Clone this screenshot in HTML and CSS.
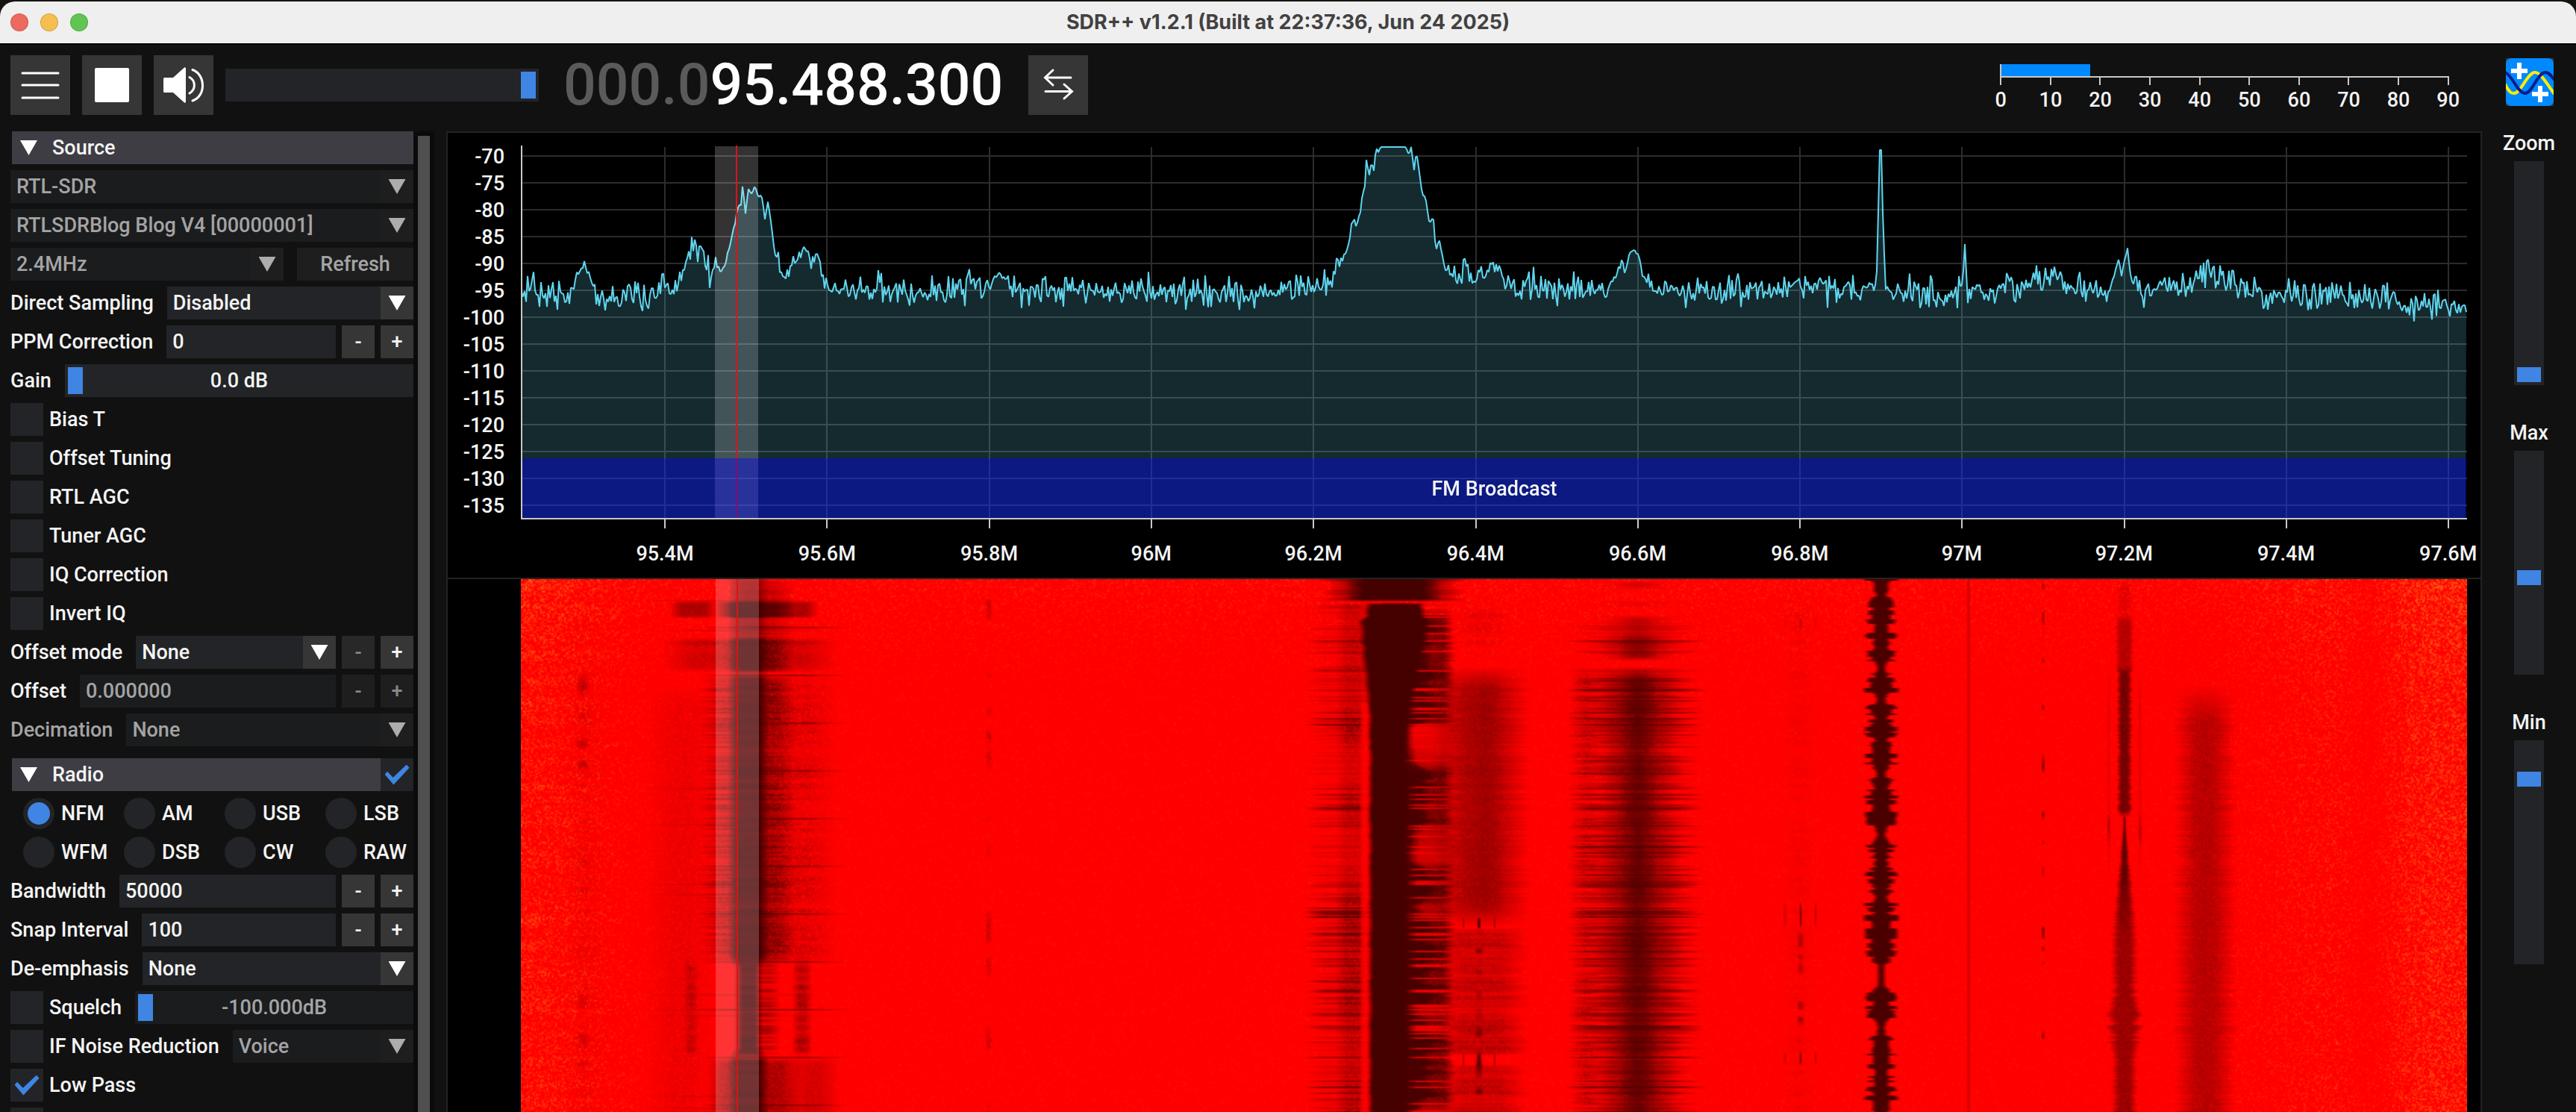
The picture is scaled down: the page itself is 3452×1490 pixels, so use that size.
FILE: index.html
```html
<!DOCTYPE html>
<html lang="en">

<head>
    <meta charset="UTF-8">
    <meta name="viewport" content="width=device-width, initial-scale=1.0">
    <title>SDR++ v1.2.1</title>
    <link rel="stylesheet" href="styles.css">
</head>

<body>
    <div class="window">
        <header class="titlebar">
            <div class="lights">
                <span class="light close"></span>
                <span class="light minimize"></span>
                <span class="light maximize"></span>
            </div>
            <h1>SDR++ v1.2.1 (Built at 22:37:36, Jun 24 2025)</h1>
        </header>

        <div class="toolbar">
            <button class="icon-btn" aria-label="Menu">
                <svg viewBox="0 0 80 80"><path d="M16 24H64M16 40H64M16 57H64" stroke="#fff" stroke-width="3" stroke-linecap="round" /></svg>
            </button>
            <button class="icon-btn" aria-label="Stop">
                <svg viewBox="0 0 80 80"><rect x="17" y="17" width="46" height="46" rx="2" fill="#fff" /></svg>
            </button>
            <button class="icon-btn" aria-label="Mute">
                <svg viewBox="0 0 80 80">
                    <path d="M13 31.500Q13 30 14.500 30H26L41 16.500Q43 15.500 43 18V62Q43 64.500 41 63.500L26 50H14.500Q13 50 13 48.500Z" fill="#fff" />
                    <path d="M48 29.500C56.500 34 56.500 46 48 51M52 19.500C70 26 70 55 52 61" fill="none" stroke="#fff" stroke-width="3" stroke-linecap="round" />
                </svg>
            </button>
            <input type="range" class="slider volume" aria-label="Volume" min="0" max="100" value="100">
            <div class="frequency"><span class="leading">000.0</span>95.488.300</div>
            <button class="icon-btn" aria-label="Tuning mode">
                <svg viewBox="0 0 80 80"><path d="M57 30H23M33 20L22.500 30L33 40M23 48.500H57M48 39L58.500 48.500L48 58" fill="none" stroke="#fff" stroke-width="3" stroke-linecap="round" /></svg>
            </button>

            <div class="snr">
                <div class="snr-track"><div class="snr-bar" style="width: 19.8%"></div></div>
                <ol class="snr-scale">
                    <li>0</li>
                    <li>10</li>
                    <li>20</li>
                    <li>30</li>
                    <li>40</li>
                    <li>50</li>
                    <li>60</li>
                    <li>70</li>
                    <li>80</li>
                    <li>90</li>
                </ol>
            </div>

            <svg class="logo" viewBox="0 0 64 64">
                <rect width="64" height="64" fill="#333" />
                <rect width="64" height="64" rx="7" fill="#0089ff" />
                <path d="M-1 35C5 47 8 47 11 47C20 47 29 19 39 19C47 19 56 36 65 48" fill="none" stroke="#ffee00" stroke-width="4" />
                <path d="M-1 19C8 22 16 47 25.500 47C36 47 42 19 53 19C58 19 61 24 65 29" fill="none" stroke="#0a1c8c" stroke-width="4" />
                <path d="M18 6V28M7 17H29M46 37V59M35 48H57" stroke="#fff" stroke-width="6" />
            </svg>
        </div>

        <div class="content">
            <aside class="sidebar">
                <div class="menu">
                    <div class="section">
                        <h2><span class="triangle"></span>Source</h2>
                    </div>
                    <div class="row disabled">
                        <div class="combo"><select disabled aria-label="Source"><option>RTL-SDR</option></select></div>
                    </div>
                    <div class="row disabled">
                        <div class="combo"><select disabled aria-label="Device"><option>RTLSDRBlog Blog V4 [00000001]</option></select></div>
                    </div>
                    <div class="row disabled">
                        <div class="combo"><select disabled aria-label="Sample rate"><option>2.4MHz</option></select></div>
                        <button class="refresh" disabled>Refresh</button>
                    </div>
                    <div class="row">
                        <label for="direct">Direct Sampling</label>
                        <div class="combo"><select id="direct"><option>Disabled</option></select></div>
                    </div>
                    <div class="row">
                        <label for="ppm">PPM Correction</label>
                        <div class="stepper">
                            <input type="text" id="ppm" value="0">
                            <button class="step">-</button>
                            <button class="step">+</button>
                        </div>
                    </div>
                    <div class="row">
                        <label for="gain">Gain</label>
                        <div class="slider-box">
                            <input type="range" class="slider" id="gain" min="0" max="49" value="0">
                            <span class="slider-value">0.0 dB</span>
                        </div>
                    </div>
                    <label class="row check"><input type="checkbox">Bias T</label>
                    <label class="row check"><input type="checkbox">Offset Tuning</label>
                    <label class="row check"><input type="checkbox">RTL AGC</label>
                    <label class="row check"><input type="checkbox">Tuner AGC</label>
                    <label class="row check"><input type="checkbox">IQ Correction</label>
                    <label class="row check"><input type="checkbox">Invert IQ</label>
                    <div class="row">
                        <label for="offset-mode">Offset mode</label>
                        <div class="stepper">
                            <div class="combo"><select id="offset-mode"><option>None</option></select></div>
                            <button class="step dim">-</button>
                            <button class="step">+</button>
                        </div>
                    </div>
                    <div class="row">
                        <label for="offset">Offset</label>
                        <div class="stepper">
                            <input type="text" id="offset" value="0.000000" disabled>
                            <button class="step" disabled>-</button>
                            <button class="step" disabled>+</button>
                        </div>
                    </div>
                    <div class="row disabled">
                        <label for="decimation">Decimation</label>
                        <div class="combo"><select id="decimation" disabled><option>None</option></select></div>
                    </div>

                    <div class="section spaced">
                        <h2><span class="triangle"></span>Radio</h2>
                        <input type="checkbox" aria-label="Enable radio" checked>
                    </div>
                    <div class="modes">
                        <label><input type="radio" name="mode" checked>NFM</label>
                        <label><input type="radio" name="mode">AM</label>
                        <label><input type="radio" name="mode">USB</label>
                        <label><input type="radio" name="mode">LSB</label>
                        <label><input type="radio" name="mode">WFM</label>
                        <label><input type="radio" name="mode">DSB</label>
                        <label><input type="radio" name="mode">CW</label>
                        <label><input type="radio" name="mode">RAW</label>
                    </div>
                    <div class="row">
                        <label for="bandwidth">Bandwidth</label>
                        <div class="stepper">
                            <input type="text" id="bandwidth" value="50000">
                            <button class="step">-</button>
                            <button class="step">+</button>
                        </div>
                    </div>
                    <div class="row">
                        <label for="snap">Snap Interval</label>
                        <div class="stepper">
                            <input type="text" id="snap" value="100">
                            <button class="step">-</button>
                            <button class="step">+</button>
                        </div>
                    </div>
                    <div class="row">
                        <label for="deemphasis">De-emphasis</label>
                        <div class="combo"><select id="deemphasis"><option>None</option></select></div>
                    </div>
                    <div class="row">
                        <label class="check"><input type="checkbox">Squelch</label>
                        <div class="slider-box disabled">
                            <input type="range" class="slider" aria-label="Squelch level" min="-100" max="0" value="-100" disabled>
                            <span class="slider-value">-100.000dB</span>
                        </div>
                    </div>
                    <div class="row">
                        <label class="check"><input type="checkbox">IF Noise Reduction</label>
                        <div class="combo disabled"><select disabled aria-label="Noise reduction preset"><option>Voice</option></select></div>
                    </div>
                    <label class="row check"><input type="checkbox" checked>Low Pass</label>
                    <label class="row check"><input type="checkbox">High Pass</label>
                </div>
                <div class="scrollbar"><div class="thumb"></div></div>
            </aside>

            <main class="plots">
                <div class="spectrum">
                    <ol class="db-scale">
                        <li>-70</li>
                        <li>-75</li>
                        <li>-80</li>
                        <li>-85</li>
                        <li>-90</li>
                        <li>-95</li>
                        <li>-100</li>
                        <li>-105</li>
                        <li>-110</li>
                        <li>-115</li>
                        <li>-120</li>
                        <li>-125</li>
                        <li>-130</li>
                        <li>-135</li>
                    </ol>
                    <canvas id="fft"></canvas>
                    <div class="band">FM Broadcast</div>
                    <ol class="freq-scale">
                        <li style="left: 7.4%">95.4M</li>
                        <li style="left: 15.73%">95.6M</li>
                        <li style="left: 24.06%">95.8M</li>
                        <li style="left: 32.39%">96M</li>
                        <li style="left: 40.72%">96.2M</li>
                        <li style="left: 49.05%">96.4M</li>
                        <li style="left: 57.38%">96.6M</li>
                        <li style="left: 65.71%">96.8M</li>
                        <li style="left: 74.04%">97M</li>
                        <li style="left: 82.37%">97.2M</li>
                        <li style="left: 90.7%">97.4M</li>
                        <li style="left: 99.03%">97.6M</li>
                    </ol>
                </div>
                <div class="waterfall">
                    <canvas id="waterfall"></canvas>
                    <div class="vfo"></div>
                </div>
            </main>

            <aside class="levels">
                <label for="zoom">Zoom</label>
                <input type="range" class="slider vertical" id="zoom" min="0" max="1000" value="0">
                <label for="max">Max</label>
                <input type="range" class="slider vertical" id="max" min="0" max="1000" value="426">
                <label for="min">Min</label>
                <input type="range" class="slider vertical" id="min" min="0" max="1000" value="860">
            </aside>
        </div>
    </div>

    <script src="script.js"></script>
</body>

</html>
```
FILE: styles.css
```css
* {
    margin: 0;
    padding: 0;
    box-sizing: border-box;
}

:root {
    --bg: #111111;
    --frame: #232427;
    --frame-disabled: #1b1c1e;
    --button: #363636;
    --button-disabled: #1e1e1e;
    --header: #3e3d44;
    --border: #232323;
    --accent: #3f85e3;
    --text: #f4f4f4;
    --text-disabled: #a4a4a4;
}

body {
    background: #14150f;
    color: var(--text);
    font-family: Roboto, "Liberation Sans", sans-serif;
    font-size: 27px;
    font-weight: 500;
    line-height: 32px;
    overflow: hidden;
}

button,
input,
select {
    font: inherit;
    color: inherit;
    border: none;
    border-radius: 0;
    outline: none;
    appearance: none;
}

ol {
    list-style: none;
}

.window {
    display: flex;
    flex-direction: column;
    height: 100vh;
    padding-top: 2px;
}

/* title bar */
.titlebar {
    display: grid;
    grid-template-columns: 1fr auto 1fr;
    align-items: center;
    height: 58px;
    flex: none;
    padding: 0 14px;
    background: #f0efef;
    border-bottom: 2px solid #000;
    border-radius: 20px 20px 0 0;
}

.titlebar h1 {
    font-family: Inter, sans-serif;
    font-size: 27px;
    font-weight: 700;
    color: #414141;
}

.lights {
    display: flex;
    gap: 16px;
}

.light {
    width: 24px;
    height: 24px;
    border-radius: 50%;
    border: 1px solid rgba(0, 0, 0, 0.15);
}

.close {
    background: #ed6a5f;
}

.minimize {
    background: #f5bf4f;
}

.maximize {
    background: #61c554;
}

/* toolbar */
.toolbar {
    display: flex;
    flex: none;
    align-items: flex-start;
    gap: 16px;
    height: 116px;
    padding: 14px 30px 0 14px;
    background: var(--bg);
}

.icon-btn {
    width: 80px;
    height: 80px;
    background: var(--button);
}

.icon-btn svg {
    display: block;
}

.volume {
    width: 420px;
    margin-top: 18px;
}

.frequency {
    margin: 0 18px 0 17px;
    font-size: 77px;
    line-height: 80px;
    color: #fff;
}

.leading {
    color: #5a5a5a;
}

.snr {
    width: 666px;
    margin: 12px 28px 0 auto;
}

.snr-track {
    height: 18px;
    margin: 0 32px;
    border-left: 2px solid #c8c8c8;
    border-bottom: 2px solid #c8c8c8;
}

.snr-bar {
    height: 16px;
    background: #0089ff;
}

.snr-scale {
    display: grid;
    grid-template-columns: repeat(10, 1fr);
    text-align: center;
}

.snr-scale li::before {
    content: "";
    display: block;
    width: 2px;
    height: 10px;
    margin: 0 auto 4px;
    background: #c8c8c8;
}

.logo {
    width: 64px;
    height: 64px;
    margin-top: 4px;
}

/* layout under the toolbar */
.content {
    display: grid;
    grid-template-columns: 582px 1fr 126px;
    flex: 1;
    min-height: 0;
    background: var(--bg);
}

.sidebar {
    display: flex;
    min-height: 0;
    overflow: hidden;
}

.menu {
    display: flex;
    flex-direction: column;
    flex: 1;
    gap: 8px;
    min-width: 0;
    padding-left: 14px;
}

.scrollbar {
    flex: none;
    width: 28px;
    padding: 6px 6px 0;
    background: #0b0b0b;
}

.thumb {
    height: 100%;
    background: #4f4f4f;
}

.row {
    display: flex;
    flex: none;
    align-items: center;
    gap: 18px;
    height: 44px;
    white-space: nowrap;
}

.disabled {
    color: var(--text-disabled);
}

.section {
    display: flex;
    flex: none;
    height: 44px;
    padding-left: 2px;
}

.spaced {
    margin-top: 8px;
}

.section h2 {
    display: flex;
    flex: 1;
    align-items: center;
    gap: 20px;
    padding-left: 11px;
    background: var(--header);
    font-size: 27px;
    font-weight: 500;
}

.triangle {
    width: 23px;
    height: 20px;
    background: #fff;
    clip-path: polygon(0 0, 100% 0, 50% 100%);
}

.combo {
    display: grid;
    flex: 1;
    grid-template-columns: 1fr 44px;
    align-items: center;
    min-width: 0;
}

.combo select {
    grid-area: 1 / 1 / 2 / 3;
    width: 100%;
    height: 44px;
    padding: 0 52px 0 8px;
    background: linear-gradient(var(--button), var(--button)) right / 44px 100% no-repeat var(--frame);
    opacity: 1;
}

.combo::after {
    content: "";
    grid-area: 1 / 2;
    justify-self: center;
    width: 23px;
    height: 20px;
    background: #fff;
    clip-path: polygon(0 0, 100% 0, 50% 100%);
    z-index: 1;
    pointer-events: none;
}

.combo select:disabled {
    background: linear-gradient(var(--button-disabled), var(--button-disabled)) right / 44px 100% no-repeat var(--frame-disabled);
}

.disabled .combo::after,
.combo.disabled::after {
    background: #adadad;
}

.refresh {
    width: 156px;
    height: 44px;
    background: var(--button-disabled);
}

.stepper {
    display: flex;
    flex: 1;
    gap: 8px;
    min-width: 0;
}

input[type="text"] {
    flex: 1;
    min-width: 0;
    height: 44px;
    padding: 0 8px;
    background: var(--frame);
}

input[type="text"]:disabled {
    background: var(--frame-disabled);
    color: var(--text-disabled);
}

.step {
    flex: none;
    width: 44px;
    height: 44px;
    background: var(--button);
}

.step.dim {
    background: #282828;
    color: #888;
}

.step:disabled {
    background: var(--button-disabled);
    color: #888;
}

/* check boxes and radio buttons */
.check {
    display: flex;
    align-items: center;
    gap: 8px;
}

input[type="checkbox"] {
    display: grid;
    place-items: center;
    flex: none;
    width: 44px;
    height: 44px;
    background: var(--frame);
}

input[type="checkbox"]:checked::before {
    content: "";
    width: 33px;
    height: 27px;
    background: var(--accent);
    clip-path: polygon(0 48%, 11% 34%, 34% 64%, 89% 0, 100% 16%, 36% 100%);
}

.modes {
    display: grid;
    flex: none;
    grid-template-columns: repeat(4, 135px);
    gap: 8px 0;
    padding-left: 17px;
    white-space: nowrap;
}

.modes label {
    display: flex;
    align-items: center;
    gap: 9px;
    height: 44px;
}

input[type="radio"] {
    display: grid;
    place-items: center;
    width: 42px;
    height: 42px;
    border-radius: 50%;
    background: var(--frame);
}

input[type="radio"]:checked::before {
    content: "";
    width: 30px;
    height: 30px;
    border-radius: 50%;
    background: var(--accent);
}

/* sliders */
.slider {
    height: 44px;
    padding: 4px;
    background: var(--frame);
}

.slider::-webkit-slider-thumb {
    appearance: none;
    width: 20px;
    height: 36px;
    background: var(--accent);
}

.slider:disabled {
    background: var(--frame-disabled);
}

.slider-box {
    display: grid;
    flex: 1;
    align-items: center;
    min-width: 0;
}

.slider-box .slider {
    grid-area: 1 / 1;
    width: 100%;
}

.slider-value {
    grid-area: 1 / 1;
    justify-self: center;
    z-index: 1;
    pointer-events: none;
}

.levels {
    display: flex;
    flex-direction: column;
    align-items: center;
}

.levels label {
    padding-bottom: 8px;
}

.vertical {
    writing-mode: vertical-lr;
    direction: rtl;
    width: 40px;
    height: 300px;
    margin-bottom: 48px;
}

.vertical::-webkit-slider-thumb {
    width: 32px;
    height: 20px;
}

/* spectrum and waterfall */
.plots {
    display: grid;
    grid-template-rows: 598px 1fr;
    min-width: 0;
    min-height: 0;
    margin-left: 16px;
    border: 2px solid var(--border);
    border-bottom: none;
    background: #000;
}

.spectrum {
    display: grid;
    grid-template-columns: 98px minmax(0, 1fr) 18px;
    grid-template-rows: 532px 64px;
    border-bottom: 2px solid var(--border);
}

.db-scale {
    padding: 14px 22px 0 0;
    line-height: 36px;
    text-align: right;
}

#fft {
    grid-area: 1 / 2;
    width: 100%;
    height: 516px;
    margin-top: 16px;
}

.band {
    display: flex;
    grid-area: 1 / 2;
    align-items: center;
    align-self: end;
    justify-content: center;
    height: 80px;
    margin: 0 1px 16px 2px;
    padding-top: 2px;
    background: rgba(0, 0, 255, 0.4);
    z-index: 1;
}

.freq-scale {
    position: relative;
    grid-area: 2 / 2;
    line-height: 64px;
}

.freq-scale li {
    position: absolute;
    transform: translateX(-50%);
}

.waterfall {
    position: relative;
    min-height: 0;
    margin: 0 18px 0 98px;
    overflow: hidden;
}

#waterfall {
    display: block;
    width: 100%;
    height: 100%;
}

.vfo {
    position: absolute;
    top: 0;
    bottom: 0;
    left: 10%;
    width: 58px;
    background: linear-gradient(#dc1414, #dc1414) center / 2px 100% no-repeat rgba(255, 255, 255, 0.2);
}
```
FILE: script.js
```javascript
// Deterministic noise helpers
function hash(a, b) {
    let h = Math.imul(a | 0, 374761393) + Math.imul(b | 0, 668265263);
    h = Math.imul(h ^ (h >>> 13), 1274126177);
    return ((h ^ (h >>> 16)) >>> 0) / 4294967296;
}

function smoothNoise(seed, t) {
    const i = Math.floor(t);
    const f = t - i;
    const k = f * f * (3 - 2 * f);
    return hash(seed, i) * (1 - k) + hash(seed, i + 1) * k;
}

function clamp(v) {
    return Math.max(0, Math.min(1, v));
}

// Both plots use a 2608 unit wide axis, stretched over the canvas
const SPAN = 2608;

// [x, y, jitter] of the trace, y counted from the top of the plot
const trace = [
    [0, 205, 11], [68, 200, 9], [74, 178, 5], [82, 166, 6], [92, 173, 3], [100, 206, 8], [182, 203, 11],
    [195, 188, 10], [203, 198, 9], [217, 172, 5], [225, 146, 5], [235, 140, 8], [245, 148, 7], [254, 172, 7],
    [262, 160, 5], [272, 166, 2], [278, 142, 2], [285, 112, 1], [288, 102, 1], [290, 84, 1], [295, 80, 1],
    [297, 54, 1], [301, 90, 1], [305, 58, 1], [310, 66, 1], [314, 54, 1], [317, 68, 1], [323, 69, 1],
    [327, 98, 1], [331, 76, 1], [335, 102, 1], [338, 130, 1], [342, 152, 2], [345, 146, 2], [348, 174, 3],
    [352, 182, 3], [360, 166, 5], [372, 156, 8], [382, 141, 3], [388, 154, 6], [396, 144, 4], [402, 172, 6],
    [412, 184, 6], [425, 195, 6], [477, 192, 9], [479, 168, 0], [481, 194, 8], [598, 194, 9], [600, 158, 0],
    [603, 182, 3], [620, 190, 8], [642, 172, 2], [660, 196, 9], [1000, 196, 9], [1062, 190, 9], [1087, 184, 8],
    [1097, 160, 7], [1105, 148, 3], [1110, 132, 2], [1114, 100, 2], [1120, 108, 7], [1127, 80, 4], [1131, 55, 2],
    [1133, 20, 1], [1137, 40, 1], [1140, 20, 1], [1143, 36, 1], [1146, 3, 0], [1149, 10, 0], [1152, 3, 0],
    [1186, 3, 0], [1190, 14, 0], [1193, 3, 0], [1197, 34, 0], [1200, 8, 0], [1204, 38, 1], [1208, 66, 1],
    [1213, 72, 2], [1217, 102, 1], [1223, 100, 1], [1226, 146, 3], [1231, 134, 4], [1238, 162, 6], [1250, 175, 7],
    [1275, 176, 11], [1298, 160, 8], [1310, 160, 6], [1318, 180, 7], [1337, 192, 9], [1452, 196, 9], [1465, 182, 4],
    [1475, 158, 3], [1480, 170, 3], [1487, 140, 2], [1492, 142, 2], [1498, 146, 1], [1503, 176, 1], [1514, 190, 6],
    [1600, 200, 8], [1725, 186, 9], [1760, 200, 9], [1816, 194, 7], [1819, 90, 0], [1821, 7, 0], [1823, 7, 0],
    [1826, 130, 0], [1829, 186, 3], [1842, 196, 10], [1900, 201, 8], [1932, 190, 9], [1935, 133, 0], [1938, 190, 7],
    [1960, 200, 8], [2022, 184, 9], [2034, 176, 7], [2080, 188, 8], [2124, 202, 9], [2134, 178, 2], [2141, 154, 1],
    [2145, 174, 1], [2153, 139, 1], [2157, 174, 2], [2166, 194, 7], [2240, 188, 8], [2259, 172, 7], [2261, 154, 0],
    [2265, 176, 5], [2284, 176, 9], [2300, 196, 9], [2412, 204, 9], [2500, 202, 8], [2514, 216, 7], [2560, 211, 9],
    [2606, 214, 7]
];

function traceLevel(x) {
    let i = 0;
    while (i < trace.length - 2 && trace[i + 1][0] < x) i++;
    const [x0, y0, j0] = trace[i];
    const [x1, y1, j1] = trace[i + 1];
    const k = clamp((x - x0) / (x1 - x0));
    const n = hash(7, x) + hash(8, x) + hash(9, x) - 1.5;
    const spike = hash(10, x) > 0.93 ? (hash(11, x) - 0.5) * 3 : 0;
    return Math.max(2, y0 + (y1 - y0) * k + (j0 + (j1 - j0) * k) * (n * 2.3 + spike));
}

function drawSpectrum() {
    const canvas = document.getElementById('fft');
    const w = canvas.width = canvas.clientWidth;
    const h = canvas.height = canvas.clientHeight;
    const ctx = canvas.getContext('2d');
    const sx = w / SPAN;
    const bottom = 500;

    // Grid
    ctx.fillStyle = '#2c2c2c';
    for (let i = 0; i < 14; i++) {
        ctx.fillRect(0, 14 + i * 36, w, 2);
    }
    for (let i = 0; i < 12; i++) {
        ctx.fillRect(Math.round((193 + i * 217.3) * sx) - 1, 3, 2, bottom - 3);
    }

    // Trace with its fill
    const path = new Path2D();
    for (let x = 1; x < SPAN; x += 2) {
        path.lineTo(x * sx, traceLevel(x));
    }
    const area = new Path2D(path);
    area.lineTo(w - 2, bottom);
    area.lineTo(1, bottom);
    area.closePath();
    ctx.fillStyle = 'rgba(100, 212, 236, 0.2)';
    ctx.fill(area);
    ctx.strokeStyle = '#60d5ee';
    ctx.lineWidth = 2;
    ctx.lineJoin = 'bevel';
    ctx.stroke(path);

    // VFO
    const left = w * 0.1;
    ctx.fillStyle = 'rgba(255, 255, 255, 0.2)';
    ctx.fillRect(Math.round(left) - 1, 2, 58, bottom - 2);
    ctx.fillStyle = '#dc1414';
    ctx.fillRect(Math.round(left) + 27, 1, 2, bottom - 1);

    // Axes and ticks
    ctx.fillStyle = '#c8c8c8';
    ctx.fillRect(0, 1, 2, bottom);
    ctx.fillRect(0, bottom, w, 2);
    for (let i = 0; i < 12; i++) {
        ctx.fillRect(Math.round((193 + i * 217.3) * sx) - 1, bottom, 2, 14);
    }
}

// Soft edged band, 1 in the middle and 0 outside
function band(x, center, half, soft) {
    return clamp((half - Math.abs(x - center)) / soft + 0.5);
}

function between(y, from, to, soft) {
    return clamp((y - from) / soft) * clamp((to - y) / soft);
}

// Everything that is constant along one line of the waterfall
function lineState(y) {
    const row = Math.round(y / 2);
    return {
        fast: hash(21, row),
        fast2: hash(22, row),
        fast3: hash(23, row),
        mid: smoothNoise(24, y / 6),
        mid2: smoothNoise(25, y / 7),
        slow: smoothNoise(26, y / 34),
        slow2: smoothNoise(27, y / 50),
        am: smoothNoise(28, y / 5)
    };
}

function signal(x, y, l, grain) {
    let s = 0;
    const add = v => { s += v * (1 - s); };

    // 95.3M, weak bursts
    if (x < 200) {
        const burst = smoothNoise(31, y / 13);
        add(band(x, 82, 5, 9) * clamp((burst - 0.66) * 2.6) * clamp((y - 110) / 30) * (0.1 + grain * 0.6));
        add(band(x, 86, 14, 30) * 0.16 * grain * l.mid * clamp(y / 160));
    }

    // 95.5M
    if (x > 130 && x < 500) {
        const burst = between(y, 28, 52, 4);
        const block = between(y, 76, 124, 8);
        const talk = between(y, 126, 515, 14);
        const tone = between(y, 505, 642, 14);
        const tail = clamp((y - 640) / 8);
        const soft = 0.5 + grain * 0.5;
        add(band(x, 304, 22 - tone * 8, 12) * clamp(0.45 + burst + block + talk + tone + tail) * (0.8 + l.mid * 0.2));
        add(band(x, 322, 30, 30) * (0.2 + l.fast * 0.35) * between(y, 0, 125, 4) * soft);
        add((band(x, 230, 24, 16) + band(x, 368, 22, 16)) * burst * (0.36 + grain * 0.14));
        add(band(x, 312, 42, 24) * burst * 0.8);
        add(band(x, 306, 96, 44) * block * (0.2 + l.mid * 0.4) * soft);
        add(band(x, 316, 34, 30) * block * 0.7 * soft);
        add(band(x, 303, 38 + l.fast * 14, 34) * talk * (0.15 + l.fast * 0.5) * soft);
        add(band(x, 326, 24 + l.mid2 * 8, 24) * talk * (0.1 + l.fast2 * 0.35 + l.slow * 0.25) * soft);
        add(band(x, 368, 36, 40) * talk * (0.08 + l.mid * 0.26) * grain * 1.2);
        add(band(x, 214, 30, 36) * clamp((y - 140) / 30) * 0.16 * grain);
        add((band(x, 376, 9, 10) + band(x, 227, 6, 8) * 0.6) * tone * (0.2 + l.mid * 0.5) * soft);
        add(band(x, 318, 22, 16) * tone * 0.5 * l.fast);
        add(band(x, 312, 50, 28) * tail * 0.55 * soft);
        add(band(x, 392, 22, 26) * tail * 0.28 * soft);
        if (Math.round(y / 2) % 32 === 0 && y > 60) {
            add(band(x, 338, 72, 60) * 0.5);
        }
        if (l.fast3 > 0.96) {
            add(band(x, 290, 80, 110) * 0.2);
        }
    }

    // 95.8M
    if (x > 600 && x < 650) {
        add(band(x, 626, 3, 3) * clamp(smoothNoise(33, y / 16) - 0.6) * 1.3 * grain);
    }

    // 96.3M, the strongest station
    if (x > 1000 && x < 1320) {
        const top = between(y, -10, 29, 3);
        const after = clamp((y - 30) / 4);
        add(band(x, 1168, 48 + l.mid * 18, 24) * top);
        add(band(x, 1168, 62 + l.fast * 26, 40) * top * 0.6);
        const shrink = clamp((y - 60) / 130);
        const edge = 43 - shrink * 20;
        add(band(x, 1170 - shrink * 9, edge - between(y, 26, 56, 8) * 8 + l.mid2 * 3, 9) * after);
        // the right sideband breaks up into short lines
        const right = clamp((l.slow - 0.08) * 2.2);
        const quiet = l.fast > 0.78 ? 0.15 : 1;
        const reach = 1196 + right * quiet * (18 + l.mid * 22);
        add(clamp((reach - x) / 14) * band(x, 1195, 40, 8) * after * (0.78 + grain * 0.22));
        add(band(x, 1210, 30 + l.fast2 * 6, 14) * after * quiet * clamp(right + 0.15) * (0.5 + grain * 0.25 + l.mid * 0.25));
        const left = clamp((l.slow2 - 0.1) * 1.6) * (0.2 + l.fast * 0.8);
        add(band(x, 1114, 16, 16) * after * (0.2 + left * 0.5) * (0.35 + grain * 0.75));
        add(band(x, 1100, 20 + l.fast2 * 22, 26) * after * (0.25 + left) * l.fast2 * l.fast * 0.9);
        if (y > 165) {
            s *= 1 - band(x, 1130, 5, 5) * 0.8;
        }
    }

    // 96.4M
    if (x > 1190 && x < 1420) {
        const body = between(y, 116, 466, 30);
        const later = clamp((y - 466) / 4);
        const gap = between(y, 452, 468, 3) + between(y, 634, 652, 3);
        add(band(x, 1284, 36 + l.fast * 16, 44) * body * (0.3 + grain * 0.18 + l.mid * 0.06));
        add(band(x, 1290, 10, 34) * body * 0.2);
        add(band(x, 1286, 36 + l.mid * 16, 34) * later * clamp(1 - gap) * (0.1 + l.mid2 * 0.3 + l.fast * 0.2) * (0.5 + grain * 0.5));
        add(band(x, 1283, 4, 4) * later * clamp(smoothNoise(36, y / 7) - 0.35) * 1.1);
        add(band(x, 1283, 2, 2) * gap * 0.8);
        add((band(x, 1262, 1, 2) + band(x, 1304, 1, 2)) * gap * 0.5);
        add(band(x, 1286, 22, 36) * between(y, 20, 110, 20) * 0.3 * l.mid * grain);
    }

    // 96.6M
    if (x > 1370 && x < 1600) {
        const body = clamp((y - 116) / 20);
        const early = between(y, 28, 116, 8) * clamp(smoothNoise(37, y / 14) * 1.6 - 0.4) + between(y, 0, 14, 6) * 0.3;
        const level = body + early * 0.7;
        add(band(x, 1496, 8 + l.slow * 6 + l.mid2 * 6, 22) * level * (0.4 + l.mid * 0.3));
        add(band(x, 1496, 26 + l.mid * 20, 36) * level * (0.32 + grain * 0.26));
        add(band(x, 1494, 34 + l.fast * 44, 36) * level * l.fast * (0.3 + l.fast2 * 0.55));
        add(band(x, 1426, 8 + l.fast3 * 10, 20) * body * l.fast2 * 0.42 * (0.4 + grain));
    }

    // 96.8M
    if (x > 1680 && x < 1750) {
        const carrier = between(y, 432, 466, 6) + between(y, 632, 650, 4) + between(y, 50, 66, 5) * 0.5;
        add(band(x, 1714, 1, 2) * carrier * 0.8);
        add((band(x, 1693, 1, 2) + band(x, 1734, 1, 2)) * carrier * 0.35);
        add(band(x, 1714, 3, 4) * clamp(smoothNoise(38, y / 7) - 0.6) * between(y, 470, 600, 10) * 1.5);
        add(band(x, 1712, 12, 24) * 0.16 * grain * l.mid);
    }

    // 96.9M, comb of short lines round a carrier
    if (x > 1780 && x < 1870) {
        const loud = clamp(smoothNoise(39, y / 20) * 2.6 - 0.2);
        const tooth = hash(40, Math.round(y / 3)) > 0.5 ? 1 : 0.3;
        const half = 4 + (l.am * 0.35 + 0.6 * tooth) * 20 * loud;
        add(band(x, 1822, half, 7) * 0.97);
    }

    // Spur at 97M
    add(band(x, 1939, 1, 1) * 0.42);

    // 97.1M
    if (x > 2020 && x < 2060) {
        add(band(x, 2039, 2, 2) * clamp(smoothNoise(41, y / 9) - 0.72) * 2);
    }

    // 97.2M
    if (x > 2090 && x < 2200) {
        const a = between(y, 48, 126, 8);
        const b = between(y, 116, 318, 8);
        const grow = clamp((y - 330) / 150);
        const swell = between(y, 550, 640, 30);
        add(band(x, 2148, 8, 6) * between(y, 0, 60, 12) * 0.25 * grain);
        add(band(x, 2148, 8 + l.fast * 3, 6) * a * 0.42 * (0.7 + grain * 0.4));
        add(band(x, 2148, 6 + l.fast * 3, 5) * b * (0.65 + grain * 0.15));
        add(band(x, 2148, 1 + grow * (9 + l.fast * 5) + swell * l.fast2 * 9, 3 + grow * 7) * clamp((y - 314) / 6) * (0.95 - grow * 0.5 + grain * 0.16));
        add((band(x, 2127, 1, 2) + band(x, 2169, 1, 2)) * (between(y, 118, 400, 40) * 0.18 + between(y, 314, 356, 12) * 0.4) * (0.5 + grain));
    }

    // 97.3M
    if (x > 2190 && x < 2330) {
        add(band(x, 2256, 22 + l.fast * 12, 26) * clamp((y - 140) / 50) * (0.22 + grain * 0.2));
        add(band(x, 2256, 8, 30) * clamp((y - 140) / 50) * 0.12);
    }

    return clamp(s);
}

// How often the noise floor shows through as orange
function floorLevel(x, y) {
    const left = clamp(1 - x / 190) * (0.5 + smoothNoise(51, y / 6) * 0.5);
    const right = clamp((x - 2240) / 330) * (1 - band(x, 2475, 28, 50) * 0.7);
    const top = clamp(1 - y / 140) * 0.15;
    return 0.1 + left * 0.5 + right * 0.42 + top;
}

function drawWaterfall() {
    const canvas = document.getElementById('waterfall');
    const w = canvas.width = Math.round(canvas.clientWidth / 2);
    const h = canvas.height = Math.round(canvas.clientHeight / 2);
    const ctx = canvas.getContext('2d');
    const image = ctx.createImageData(w, h);
    let p = 0;

    for (let row = 0; row < h; row++) {
        const y = row * 2;
        const line = lineState(y);
        for (let col = 0; col < w; col++) {
            const x = col * SPAN / w;
            const grain = hash(col + 1000, row);
            const s = signal(x, y, line, grain);
            const spark = hash(col + 5000, row + 300);
            let green = 0;
            if (s < 0.08) {
                green = clamp(spark - 1 + floorLevel(x, y)) * 150;
            }
            image.data[p++] = 255 - s * 186;
            image.data[p++] = green;
            image.data[p++] = green * 0.2;
            image.data[p++] = 255;
        }
    }
    ctx.putImageData(image, 0, 0);
}

function draw() {
    drawSpectrum();
    drawWaterfall();
}

window.addEventListener('resize', draw);
draw();
```
